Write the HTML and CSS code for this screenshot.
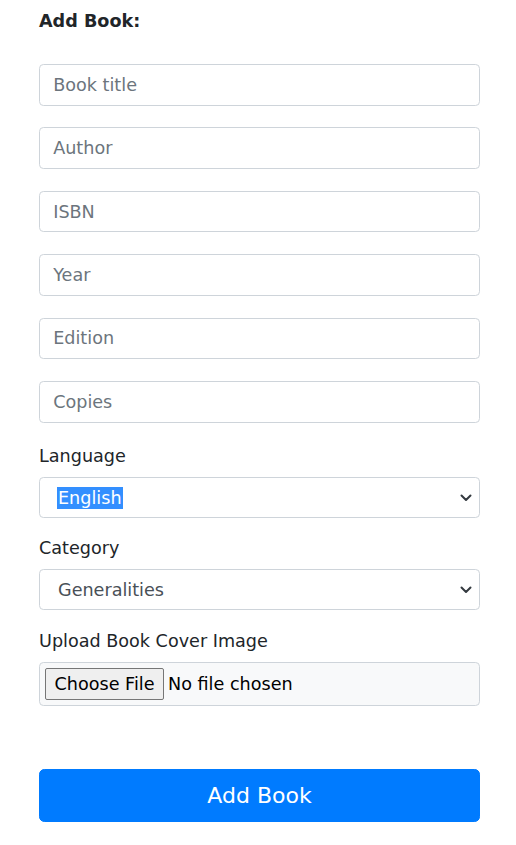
FILE: index.html
```
<!DOCTYPE html>
<html lang="en">
<head>
<meta charset="utf-8">
<title>Add Book</title>
<link rel="stylesheet" href="styles.css">
</head>
<body>
<div class="page">
  <form class="book-form">
    <div class="form-title">Add Book:</div>
    <div class="fields">
      <input class="form-control" type="text" placeholder="Book title">
      <input class="form-control" type="text" placeholder="Author">
      <input class="form-control" type="text" placeholder="ISBN">
      <input class="form-control" type="text" placeholder="Year">
      <input class="form-control" type="text" placeholder="Edition">
      <input class="form-control" type="text" placeholder="Copies">
    </div>
    <div class="form-group language-group">
      <label class="form-label">Language</label>
      <div class="select-box">
        <span class="select-value selected">English</span>
        <svg class="chevron" width="12" height="8" viewBox="0 0 12 8"><path d="M1.5 1.5 L6 6 L10.5 1.5" fill="none" stroke="#343a40" stroke-width="2" stroke-linecap="round" stroke-linejoin="round"/></svg>
      </div>
    </div>
    <div class="form-group category-group">
      <label class="form-label">Category</label>
      <div class="select-box">
        <span class="select-value">Generalities</span>
        <svg class="chevron" width="12" height="8" viewBox="0 0 12 8"><path d="M1.5 1.5 L6 6 L10.5 1.5" fill="none" stroke="#343a40" stroke-width="2" stroke-linecap="round" stroke-linejoin="round"/></svg>
      </div>
    </div>
    <div class="form-group upload-group">
      <label class="form-label">Upload Book Cover Image</label>
      <div class="file-box">
        <span class="file-button">Choose File</span>
        <span class="file-text">No file chosen</span>
      </div>
    </div>
    <button class="btn-submit" type="button">Add Book</button>
  </form>
</div>
</body>
</html>
```
FILE: styles.css
```
html { font-size: 17.6px; }
body {
  margin: 0;
  font-family: "DejaVu Sans", Verdana, sans-serif;
  color: #212529;
  background: #fff;
}
.page {
  padding: 8px 36px 0 39px;
}
.book-form {
  display: flex;
  flex-direction: column;
}
.form-title {
  font-weight: bold;
  font-size: 17.6px;
  line-height: 26.4px;
  margin-bottom: 29.6px;
}
.fields {
  display: flex;
  flex-direction: column;
  gap: 21.8px;
  margin-bottom: 20px;
}
.form-control {
  box-sizing: border-box;
  display: block;
  width: 100%;
  height: 41.6px;
  padding: 6.6px 13.2px;
  font-family: inherit;
  font-size: 17.6px;
  line-height: 26.4px;
  color: #495057;
  background: #fff;
  border: 1px solid #ced4da;
  border-radius: 4.4px;
  margin: 0;
}
.form-control::placeholder { color: #6c757d; opacity: 1; }
.form-group {
  display: flex;
  flex-direction: column;
}
.language-group { margin-bottom: 16.2px; }
.category-group { margin-bottom: 17.2px; }
.upload-group { margin-bottom: 63px; }
.form-label {
  font-size: 17.6px;
  line-height: 26.4px;
  margin-bottom: 7.8px;
}
.select-box {
  box-sizing: border-box;
  height: 41.6px;
  border: 1px solid #ced4da;
  border-radius: 4.4px;
  display: flex;
  align-items: center;
  justify-content: space-between;
  padding: 0 7px 0 17px;
  color: #495057;
  font-size: 17.6px;
}
.select-value {
  line-height: 22px;
  padding: 0 1px;
}
.select-value.selected {
  background: #338fff;
  color: #fff;
}
.chevron { display: block; }
.file-box {
  box-sizing: border-box;
  height: 44px;
  border: 1px solid #ced4da;
  border-radius: 4.4px;
  background: #f8f9fa;
  padding: 5px;
  display: flex;
  align-items: center;
}
.file-button {
  box-sizing: border-box;
  height: 32px;
  padding: 0 8.5px;
  border: 1px solid #767676;
  border-radius: 2px;
  background: #efefef;
  color: #000;
  font-size: 17.6px;
  line-height: 30px;
  margin-right: 4px;
}
.file-text {
  color: #000;
  font-size: 17.6px;
}
.btn-submit {
  box-sizing: border-box;
  width: 100%;
  height: 52.8px;
  padding: 8.8px 17.6px;
  font-family: inherit;
  font-size: 22px;
  line-height: 33px;
  color: #fff;
  background: #007bff;
  border: 1px solid #007bff;
  border-radius: 5.3px;
}
```
